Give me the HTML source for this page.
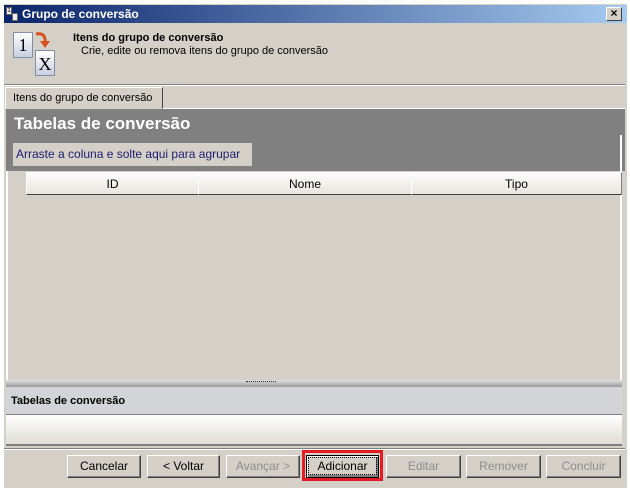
<!DOCTYPE html>
<html><head><meta charset="utf-8"><style>
*{margin:0;padding:0;box-sizing:border-box}
body{width:630px;height:493px;background:#fff;position:relative;overflow:hidden;font-family:"Liberation Sans",sans-serif;font-size:11px}
.a{position:absolute}
#win{left:4px;top:4px;width:623px;height:484px;background:#d4d0c8}
#title{left:4px;top:5px;width:623px;height:18px;background:linear-gradient(90deg,#0a246a,#a6caf0);color:#fff;font-weight:bold;font-size:12px;line-height:18px;padding-left:18px}
.btn{position:absolute;top:455px;height:23px;background:#d4d0c8;border:1px solid;border-color:#fff #404040 #404040 #fff;box-shadow:inset -1px -1px #808080;text-align:center;line-height:21px;font-size:12px}
.dis{color:#8d8d8d}
.col{position:absolute;top:172px;height:23px;background:linear-gradient(#fcfcfb,#e8e6df);border:1px solid;border-color:#fff #808080 #404040 #fff;text-align:center;line-height:22px;font-size:12px}
</style></head><body>
<div id="win" class="a"></div>
<div id="title" class="a">Grupo de conversão</div>
<div class="a" style="left:6px;top:7px;width:6px;height:8px;background:#eee;border:1px solid #666;font-size:6px;color:#000;line-height:6px;text-align:center">1</div>
<div class="a" style="left:12px;top:13px;width:6px;height:8px;background:#eee;border:1px solid #666"></div>
<div class="a" style="left:606px;top:7px;width:16px;height:14px;background:#d4d0c8;border:1px solid;border-color:#fff #404040 #404040 #fff;font-weight:bold;font-size:12px;line-height:11px;text-align:center">×</div>
<!-- header icon -->
<div class="a" style="left:13px;top:32px;width:20px;height:26px;background:linear-gradient(#fff,#c8cfe0);border:1px solid #8090a8;font-family:'Liberation Serif',serif;font-size:18px;line-height:24px;text-align:center">1</div>
<div class="a" style="left:35px;top:50px;width:20px;height:26px;background:linear-gradient(#fff,#c8cfe0);border:1px solid #8090a8;font-family:'Liberation Serif',serif;font-size:18px;line-height:26px;text-align:center">X</div>
<svg class="a" style="left:33px;top:30px" width="20" height="20"><path d="M3 4 Q13 2 12 13" stroke="#d8501e" stroke-width="3" fill="none"/><path d="M7 11 L12 18 L17 11Z" fill="#d8501e"/></svg>
<div class="a" style="left:73px;top:32px;font-weight:bold">Itens do grupo de conversão</div>
<div class="a" style="left:81px;top:45px">Crie, edite ou remova itens do grupo de conversão</div>
<div class="a" style="left:4px;top:84px;width:621px;height:2px;border-top:1px solid #808080;border-bottom:1px solid #fff"></div>
<!-- tab -->
<div class="a" style="left:5px;top:87px;width:158px;height:22px;border:1px solid;border-color:#fff #404040 transparent #fff;line-height:20px;padding-left:7px;font-size:11px">Itens do grupo de conversão</div>
<div class="a" style="left:163px;top:108px;width:462px;height:1px;background:#fff"></div>
<!-- gray panel -->
<div class="a" style="left:6px;top:109px;width:619px;height:62px;background:#808080"></div>
<div class="a" style="left:14px;top:114px;color:#fff;font-weight:bold;font-size:17px">Tabelas de conversão</div>
<div class="a" style="left:13px;top:143px;width:239px;height:23px;background:#d4d0c8;color:#1c1c70;font-size:12px;line-height:23px;padding-left:3px">Arraste a coluna e solte aqui para agrupar</div>
<div class="a" style="left:6px;top:171px;width:2px;height:209px;background:#fff"></div>
<div class="a" style="left:620px;top:135px;width:2px;height:245px;background:#fff"></div>
<div class="col" style="left:26px;width:173px">ID</div>
<div class="col" style="left:198px;width:214px">Nome</div>
<div class="col" style="left:411px;width:211px">Tipo</div>
<!-- splitter -->
<div class="a" style="left:6px;top:380px;width:616px;height:7px;background:linear-gradient(#e0e0e0,#9a9a9a)"></div>
<div class="a" style="left:246px;top:381px;width:30px;height:2px;border-top:1px dotted #333"></div>
<div class="a" style="left:6px;top:387px;width:616px;height:28px;background:#d3d4d8;border-bottom:1px solid #808080;font-weight:bold;font-size:11px;line-height:28px;padding-left:5px">Tabelas de conversão</div>
<div class="a" style="left:6px;top:415px;width:616px;height:31px;background:linear-gradient(#fff,#e0ddd5);border-bottom:2px solid #808080"></div>
<div class="a" style="left:4px;top:448px;width:621px;height:2px;border-top:1px solid #808080;border-bottom:1px solid #fff"></div>
<!-- buttons -->
<div class="btn" style="left:67px;width:74px">Cancelar</div>
<div class="btn" style="left:147px;width:73px">&lt; Voltar</div>
<div class="btn dis" style="left:226px;width:74px">Avançar &gt;</div>
<div class="a" style="left:302px;top:450px;width:81px;height:31px;border:3px solid #e41b23"></div>
<div class="btn" style="left:306px;width:73px;border-color:#000;box-shadow:inset 1px 1px #fff,inset -2px -2px #808080"><span style="border:1px dotted #000;padding:1px 8px">Adicionar</span></div>
<div class="btn dis" style="left:386px;width:75px">Editar</div>
<div class="btn dis" style="left:466px;width:75px">Remover</div>
<div class="btn dis" style="left:546px;width:75px">Concluir</div>
</body></html>
